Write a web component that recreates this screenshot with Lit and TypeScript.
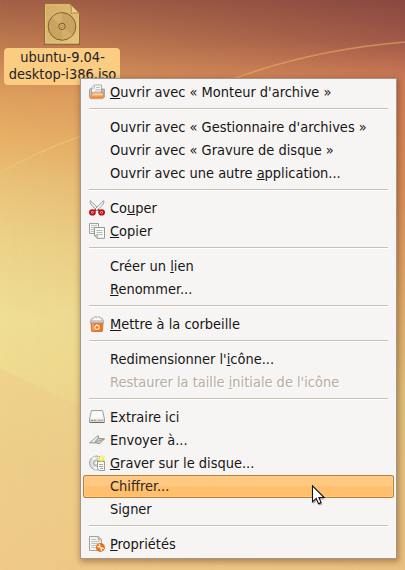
import { LitElement, html, css, svg, nothing } from "lit";
import { customElement, property } from "lit/decorators.js";

type Entry = { label: string; icon?: string; disabled?: boolean; active?: boolean } | null;

const ENTRIES: Entry[] = [
  { label: "_Ouvrir avec « Monteur d'archive »", icon: "open" },
  null,
  { label: "Ouvrir avec « Gestionnaire d'archives »" },
  { label: "Ouvrir avec « Gravure de disque »" },
  { label: "Ouvrir avec une autre _application..." },
  null,
  { label: "Co_uper", icon: "cut" },
  { label: "_Copier", icon: "copy" },
  null,
  { label: "Créer un _lien" },
  { label: "_Renommer..." },
  null,
  { label: "_Mettre à la corbeille", icon: "trash" },
  null,
  { label: "Redimensionner l'_icône..." },
  { label: "Restaurer la taille _initiale de l'icône", disabled: true },
  null,
  { label: "Extraire ici", icon: "drive" },
  { label: "Envoyer à...", icon: "send" },
  { label: "_Graver sur le disque...", icon: "burn" },
  { label: "Chiffrer...", active: true },
  { label: "Signer" },
  null,
  { label: "_Propriétés", icon: "properties" },
];

const ICONS: Record<string, unknown> = {
  open: svg`
    <path d="M.5 5.5 1.5 4.5H5V14H1.2L.5 13z" fill="#c4c2c0" stroke="#96938f" stroke-width=".8"/>
    <path d="M2.5 9V4L5.3 1h7.2V10z" fill="#f8f8f7" stroke="#9a9896" stroke-width=".8"/>
    <path d="M5.5 1.5V4.3H2.8M7 3.5h4M6.5 5.5h5M5 7.3h7" fill="none" stroke="#b5b5b5" stroke-width=".8"/>
    <path d="M12.8 5h2.6V13l-1 1z" fill="#c2bfbc" stroke="#96928e" stroke-width=".8"/>
    <path d="M3 8.8h12l-1.1 5.9H1.3z" fill="#f7a45c" stroke="#d08e66" stroke-width=".8"/>
    <path d="M3.8 9.4h10.2l-.4 1.8H3.2z" fill="#fbd3a8"/>
    <path d="M2.6 12.4h11l-.3 1.6H2z" fill="#f08a3c"/>`,
  cut: svg`
    <path d="M1.3.7C.6 3.4 3 6.4 8.6 10.6L10 9z" fill="#f4f4f3" stroke="#8f918c" stroke-width=".9"/>
    <path d="M14.7.7C15.4 3.4 13 6.4 7.4 10.6L6 9z" fill="#fafaf9" stroke="#8f918c" stroke-width=".9"/>
    <path d="M5 11 7 9.8M11 11 9 9.8" stroke="#c51a20" stroke-width="1.8"/>
    <g fill="#efdddc" stroke="#c01018" stroke-width="2">
      <ellipse cx="3.4" cy="12.4" rx="2.4" ry="2.1"/><ellipse cx="12.6" cy="12.4" rx="2.4" ry="2.1"/></g>
    <circle cx="3.4" cy="12.4" r=".7" fill="#a33"/><circle cx="12.6" cy="12.4" r=".7" fill="#a33"/>`,
  copy: svg`
    <path d="M.5.5h9v10h-9z" fill="#f6f6f5" stroke="#a0a29d"/>
    <path d="M2 2.5h6M2 4.5h6M2 6.5h4M2 8.5h3" stroke="#c0c1be"/>
    <path d="M5.5 4.5h10v10.8H8.2L5.5 12.6z" fill="#fafaf9" stroke="#979994"/>
    <path d="M7.5 7.5h6M7.5 9.5h6M7.5 11.5h6" stroke="#b8b9b6"/>
    <path d="M5.5 12.4h2.9v2.9z" fill="#dcddda" stroke="#979994" stroke-width=".7"/>`,
  trash: svg`
    <path d="M2 5.5C1.5 3 3 2 4.5 2.2 5 .5 7.7.4 8.5 1.2c1.6-.8 3.2 0 3.5 1.1 1.6.1 2.5 1.6 2 3.2z" fill="#e4e4e2" stroke="#959595" stroke-width=".8"/>
    <path d="M4 4.4 5.8 2.3 7 4.5 9 2l1 2.3 1.6-1.2" fill="none" stroke="#fff" stroke-width="1.1"/>
    <path d="M1.9 6.5h12.2l-.8 9H2.7z" fill="#f2781f" stroke="#cf6a2a" stroke-width=".8"/>
    <path d="M3 7.3h1.6l.4 7.6H3.6z" fill="#f8a365"/>
    <path d="M1.3 5h13.4v1.8H1.3z" fill="#dddbd9" stroke="#a19e9b" stroke-width=".7"/>
    <path d="M6.4 10 8 9l1.9 1.1.4 1.9-1.2 1.3H6.9L5.8 12z" fill="none" stroke="#fff" stroke-width="1.1" stroke-linejoin="round"/>`,
  drive: svg`
    <path d="M2.5 1.5h11l2 8.5v3.5H.5V10z" fill="#f0f0ee" stroke="#a0a09d"/>
    <path d="M3.4 2.5h9.2l1.6 6.8H1.8z" fill="#fafaf9"/>
    <path d="M1 10h14v3H1z" fill="#d6d6d3"/>
    <path d="M1 13.5h14" stroke="#6c6d69"/>
    <path d="M2.5 11.5h1.3" stroke="#666"/><path d="M5 11.5h2" stroke="#73c91a"/>
    <path d="M9 11.5h5" stroke="#b4b4b1"/>`,
  send: svg`
    <path d="M.5 10.8 9.2 3.6l.5 2.9 5.9.3-5 5-3.2-.8z" fill="#d0d1ce" stroke="#8a8c87" stroke-width=".9"/>
    <path d="M1.8 10.2 8.6 4.6 6 9.4z" fill="#f0f0ee"/>
    <path d="M6 10.4 15 7M5.6 9.9l4-3.4" fill="none" stroke="#8f918c" stroke-width=".8"/>`,
  burn: svg`
    <circle cx="7.5" cy="8" r="7" fill="#dededc" stroke="#9a9c97" stroke-width=".9"/>
    <path d="M7.5 8 2.8 3a7 7 0 0 1 3.3-1.8zM7.5 8l1 6.5a7 7 0 0 1-4-.6z" fill="#f5f5f4"/>
    <circle cx="7.5" cy="8" r="3" fill="#cfcfcc" stroke="#a0a29d" stroke-width=".8"/>
    <circle cx="7.5" cy="8" r="1.3" fill="#fff"/>
    <path d="M8.5 6.5h7v9H10l-1.5-2z" fill="#f9f9f8" stroke="#8f918c" stroke-width=".9"/>
    <path d="M10 9.5h4M10 11.5h4M11 13.5h3" stroke="#9c9e99" stroke-width=".9"/>
    <path d="m12.5-.3 1.2 2 2.3-.3-1 2.2 1 2.1-2.3-.2-1.2 1.9-1.2-1.9-2.2.2.9-2.1-.9-2.2 2.2.3z" fill="#f7e545"/>
    <circle cx="12.5" cy="3.5" r="1.4" fill="#fffbc0"/>`,
  properties: svg`
    <path d="M.5.5h8.7l3.3 3.3v10.7H.5z" fill="#f4f4f3" stroke="#989a95" stroke-width=".9"/>
    <path d="M9.2.6v3.3h3.3z" fill="#d8d8d5" stroke="#989a95" stroke-width=".7"/>
    <path d="M2.3 3.5h5M2.3 5.5h8M2.3 7.5h7M2.3 9.5h5M2.3 11.5h4.5" stroke="#b8bab6" stroke-width=".9"/>
    <circle cx="11.4" cy="11.4" r="4.5" fill="#f36b14"/>
    <path d="m9.9 9.9 3.2 3.2" stroke="#fff" stroke-width="1.6"/>
    <path d="M8.5 10c.4 1.3 2.1 1 2.2-.2.1-.7-.3-1.2-.8-1.5M14.4 13c-.4-1.3-2.1-1-2.3.2-.1.7.3 1.3.8 1.5" fill="none" stroke="#fff" stroke-width="1.1"/>`,
};

@customElement("menu-entry")
class MenuEntry extends LitElement {
  @property() label = "";
  @property() icon = "";
  @property({ type: Boolean, reflect: true }) disabled = false;
  @property({ type: Boolean, reflect: true }) active = false;

  static styles = css`
    :host {
      display: flex;
      align-items: flex-start;
      box-sizing: border-box;
      height: 23px;
      padding: 0 5px;
      border: 1px solid transparent;
      border-radius: 2px;
      color: #161616;
    }
    :host([active]) {
      border-color: #b9823c;
      background: linear-gradient(#ffc982 0 48%, #ffbf6c 52% 100%);
      box-shadow: inset 0 0 0 1px #ffd08f66;
      color: #2e2820;
    }
    :host([disabled]) {
      color: #b9aca1;
      text-shadow: 1px 1px #fff;
    }
    .icon {
      width: 16px;
      height: 16px;
      margin: 2px 5px 0 0;
      flex: none;
    }
    svg {
      display: block;
      overflow: visible;
    }
    .label {
      white-space: pre;
      line-height: 21px;
    }
    .key {
      text-decoration: underline 1px;
      text-underline-offset: 1px;
      text-decoration-skip-ink: none;
    }
  `;

  render() {
    const at = this.label.indexOf("_");
    const text =
      at < 0
        ? this.label
        : html`${this.label.slice(0, at)}<span class="key">${this.label[at + 1]}</span>${this.label.slice(at + 2)}`;
    return html`<span class="icon"
        >${this.icon ? html`<svg width="16" height="16" viewBox="0 0 16 16">${ICONS[this.icon]}</svg>` : nothing}</span
      ><span class="label">${text}</span>`;
  }
}

@customElement("app-root")
class AppRoot extends LitElement {
  static styles = css`
    :host {
      display: block;
      position: relative;
      width: 405px;
      height: 570px;
      overflow: hidden;
      font: 14.46px "DejaVu Sans Condensed", "DejaVu Sans", sans-serif;
      font-stretch: condensed;
    }
    .wallpaper {
      position: absolute;
      inset: 0;
    }
    .file {
      position: relative;
      display: flex;
      flex-direction: column;
      align-items: center;
      width: 116px;
      margin-left: 4px;
      padding-top: 3px;
    }
    .name {
      width: 116px;
      height: 37px;
      margin-top: 2px;
      padding: 1px 0 0 1px;
      box-sizing: border-box;
      border-radius: 4px;
      background: #facd82;
      color: #222;
      text-align: center;
      line-height: 17px;
    }
    .menu {
      position: absolute;
      left: 80px;
      top: 78px;
      width: 317px;
      height: 481px;
      box-sizing: border-box;
      padding: 2px;
      border: 1px solid #a3968c;
      background: #f6f5f3;
      box-shadow: 1px 2px 6px 1px #50280066;
    }
    .rule {
      height: 1px;
      margin: 4px 6px 7px;
      background: #c9bfb3;
      box-shadow: 0 1px #fff;
    }
    .pointer {
      position: absolute;
      left: 311px;
      top: 484px;
    }
  `;

  render() {
    return html`
      <svg class="wallpaper" width="405" height="570" viewBox="0 0 405 570">
        <defs>
          <linearGradient id="left" x1="0" y1="0" x2="0" y2="1">
            <stop offset="0" stop-color="#a25f46" />
            <stop offset=".08" stop-color="#c07c50" />
            <stop offset=".17" stop-color="#dfa05e" />
            <stop offset=".25" stop-color="#e7b268" />
            <stop offset=".32" stop-color="#e9c279" />
            <stop offset=".43" stop-color="#ecd389" />
            <stop offset=".56" stop-color="#efdf94" />
            <stop offset=".64" stop-color="#efdc90" />
            <stop offset=".8" stop-color="#edd08a" />
            <stop offset="1" stop-color="#efc987" />
          </linearGradient>
          <linearGradient id="right" x1="0" y1="0" x2="0" y2="1">
            <stop offset="0" stop-color="#884840" />
            <stop offset=".07" stop-color="#a05848" />
            <stop offset=".14" stop-color="#cc7a56" />
            <stop offset=".35" stop-color="#d88f5a" />
            <stop offset=".55" stop-color="#deac6c" />
            <stop offset=".7" stop-color="#dfc07a" />
            <stop offset=".85" stop-color="#e6c080" />
            <stop offset="1" stop-color="#e8bf80" />
          </linearGradient>
          <linearGradient id="fade">
            <stop offset="0" stop-color="#fff" stop-opacity="0" />
            <stop offset=".2" stop-color="#fff" stop-opacity=".1" />
            <stop offset="1" stop-color="#fff" />
          </linearGradient>
          <linearGradient id="crease" x1="0" y1="0" x2="0" y2="1">
            <stop offset="0" stop-color="#edc283" stop-opacity=".3" />
            <stop offset="1" stop-color="#edc283" stop-opacity="0" />
          </linearGradient>
          <mask id="across"><path d="M0 0h405v570H0z" fill="url(#fade)" /></mask>
        </defs>
        <path d="M0 0h405v570H0z" fill="url(#left)" />
        <path d="M0 0h405v570H0z" fill="url(#right)" mask="url(#across)" />
        <path d="M0 368 84 408V570H0z" fill="url(#crease)" />
        <path d="M0 173Q40 150 84 135" fill="none" stroke="#edc673" stroke-opacity=".7" stroke-width="1.5" />
        <path d="M230 80Q310 50 405 42" fill="none" stroke="#eeb468" stroke-opacity=".55" stroke-width="1.5" />
      </svg>
      <div class="file">
        <svg width="38" height="43" viewBox="0 0 38 43">
          <defs>
            <linearGradient id="paper" x1="0" y1="0" x2="1" y2="1">
              <stop offset="0" stop-color="#d3ad66" /><stop offset=".5" stop-color="#dcb972" /><stop offset="1" stop-color="#e8c47b" />
            </linearGradient>
          </defs>
          <path d="M1 40h36v2H1z" fill="#6b4222" opacity=".35" />
          <path d="M1.5.8h26l9 9.2v31h-35z" fill="url(#paper)" stroke="#8c6833" />
          <path d="M2.5 1.8h25l8 8.6v29.6h-33z" fill="none" stroke="#e6c47e" />
          <path d="M27 .8c2 3.5 1.5 7.5 1 9.7 2.4-.9 5.9-1.1 8.5 0z" fill="#efd08d" stroke="#a37e42" stroke-width=".8" />
          <circle cx="19" cy="23.4" r="13.8" fill="#c9a461" stroke="#7d5f31" />
          <path d="M19 23.4 9 14.5A13.3 13.3 0 0 1 19 10zM19 23.4l10.5 8.4A13.3 13.3 0 0 1 19 36.6z" fill="#dcb873" opacity=".6" />
          <circle cx="19" cy="23.4" r="3.2" fill="#d8b26d" stroke="#79592c" />
          <circle cx="19" cy="23.4" r="1.3" fill="#e7c27a" stroke="#8c6a38" stroke-width=".6" />
        </svg>
        <div class="name">ubuntu-9.04-<br />desktop-i386.iso</div>
      </div>
      <div class="menu">
        ${ENTRIES.map((e) =>
          e
            ? html`<menu-entry
                .label=${e.label}
                .icon=${e.icon ?? ""}
                ?disabled=${!!e.disabled}
                ?active=${!!e.active}
              ></menu-entry>`
            : html`<div class="rule"></div>`
        )}
      </div>
      <svg class="pointer" width="16" height="24" viewBox="0 0 16 24">
        <path d="M2 3v17l4-3.5 2.3 5.2 3-1.3-2.2-5H14z" fill="#300800" opacity=".3" />
        <path d="M1.5 1.8v16l3.7-3.4 2.3 5.3 2.6-1.1-2.2-5.1h5.2z" fill="#fff" stroke="#111" stroke-width="1.1" />
      </svg>
    `;
  }
}
